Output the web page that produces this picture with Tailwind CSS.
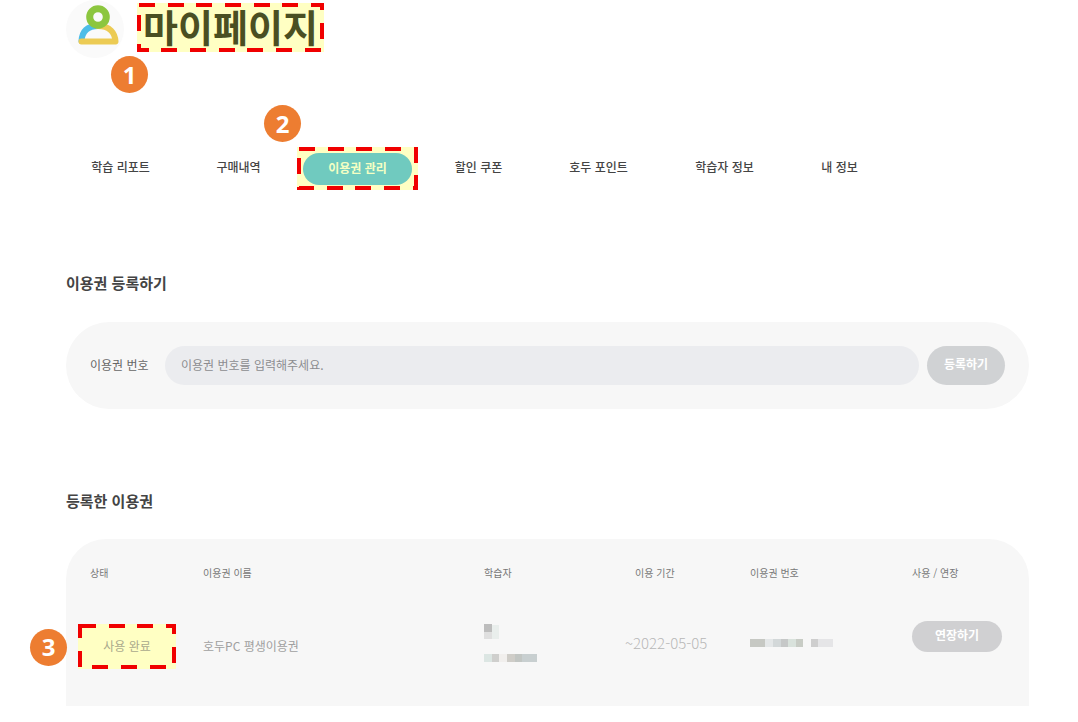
<!DOCTYPE html>
<html lang="ko">
<head>
  <meta charset="UTF-8" />
  <meta name="viewport" content="width=device-width, initial-scale=1.0" />
  <title>마이페이지</title>
  <script src="https://cdn.jsdelivr.net/npm/@tailwindcss/browser@4"></script>
</head>
<body class="bg-white font-['Noto_Sans_CJK_KR',sans-serif] text-[#444]">
  <div class="pl-[66px] pr-[49px] pb-4">
    <!-- Page title -->
    <header class="flex h-[60px] items-start gap-[13px]">
      <div class="flex h-[58px] w-[58px] items-center justify-center rounded-full bg-[#fafafa]">
        <svg class="h-[58px] w-[58px]" viewBox="0 0 58 58" fill="none" stroke-linecap="round" stroke-linejoin="round">
          <path d="M15.5 41C16 33 20 26 32 26" stroke="#4dbde8" stroke-width="6" />
          <path d="M32 26C44 26 49 33 49.5 41.5H15.5" stroke="#eccb54" stroke-width="6" />
          <circle cx="32" cy="17" r="8.3" fill="#fafafa" stroke="#8cc63f" stroke-width="7" />
        </svg>
      </div>
      <div class="relative mt-[3px] flex h-[49px] w-[187px] items-center justify-center bg-[#ffffc3]">
        <h1 class="pb-1 text-[38px] leading-[45px] font-bold text-[#4a4f22]">마이페이지</h1>
        <svg class="absolute inset-0 h-full w-full" aria-hidden="true">
          <rect x="2" y="2" width="183" height="45" fill="none" stroke="#f00000" stroke-width="4" stroke-dasharray="16 13 16 12 16 13" />
        </svg>
        <span class="absolute -left-[26px] top-[53px] flex h-[37px] w-[37px] items-center justify-center rounded-full bg-[#ed7d31] font-['Open_Sans',sans-serif] text-[24px] font-bold text-white">1</span>
      </div>
    </header>

    <!-- Tabs -->
    <nav class="mt-[87px] flex h-[43px] items-center text-[12px] font-medium">
      <a href="#" class="w-[109px] pb-1 text-center">학습 리포트</a>
      <a href="#" class="ml-[19px] w-[89px] pb-1 text-center">구매내역</a>
      <div class="relative ml-[14px] flex h-[43px] w-[121px] items-center justify-center bg-[#ffffc3]">
        <a href="#" class="h-[32px] w-[109px] rounded-full bg-[#70cabf] text-center leading-[30px] font-bold text-[#f4ffc3]">이용권 관리</a>
        <svg class="pointer-events-none absolute inset-0 h-full w-full" aria-hidden="true">
          <rect x="2" y="2" width="117" height="39" fill="none" stroke="#f00000" stroke-width="4" stroke-dasharray="16 13 16 12 16 13" />
        </svg>
        <span class="absolute -left-[33px] -top-[42px] flex h-[37px] w-[37px] items-center justify-center rounded-full bg-[#ed7d31] font-['Open_Sans',sans-serif] text-[24px] font-bold text-white">2</span>
      </div>
      <a href="#" class="ml-[16px] w-[89px] pb-1 text-center">할인 쿠폰</a>
      <a href="#" class="ml-[21px] w-[109px] pb-1 text-center">호두 포인트</a>
      <a href="#" class="ml-[17px] w-[109px] pb-1 text-center">학습자 정보</a>
      <a href="#" class="ml-[26px] w-[69px] pb-1 text-center">내 정보</a>
    </nav>

    <!-- Register a pass -->
    <section class="mt-[81px]">
      <h2 class="text-[15px] leading-[24px] font-bold text-[#444]">이용권 등록하기</h2>
      <form class="mt-[27px] flex h-[87px] items-center rounded-[44px] bg-[#f7f7f7] px-6">
        <label for="passNumber" class="w-[75px] shrink-0 pb-[2px] text-[12px] text-[#666]">이용권 번호</label>
        <input id="passNumber" type="text" placeholder="이용권 번호를 입력해주세요."
          class="h-[39px] min-w-0 flex-1 rounded-full bg-[#ebecef] px-4 pb-[2px] text-[12px] placeholder:text-[#8c8c90] focus:outline-none" />
        <button type="button" class="ml-2 h-[39px] w-[78px] rounded-full bg-[#d0d2d4] pb-1 text-[12px] font-bold text-white">등록하기</button>
      </form>
    </section>

    <!-- Registered passes -->
    <section class="mt-[80px]">
      <h2 class="text-[15px] leading-[24px] font-bold text-[#444]">등록한 이용권</h2>
      <div class="mt-[26px] h-[167px] rounded-t-[40px] bg-[#f7f7f7]">
        <table class="w-full table-fixed text-left">
          <thead>
            <tr class="h-[66px] text-[10px] text-[#777]">
              <th class="w-[137px] pl-6 font-normal">상태</th>
              <th class="w-[281px] font-normal">이용권 이름</th>
              <th class="w-[141px] font-normal">학습자</th>
              <th class="w-[125px] pl-[10px] font-normal">이용 기간</th>
              <th class="w-[162px] font-normal">이용권 번호</th>
              <th class="font-normal">사용 / 연장</th>
            </tr>
          </thead>
          <tbody>
            <tr class="h-[82px] text-[12px] text-[#a0a0a0]">
              <td class="pl-3">
                <div class="relative flex h-[45px] w-[98px] items-center justify-center bg-[#ffffc3]">
                  <span class="text-[#aaa98c]">사용 완료</span>
                  <svg class="absolute inset-0 h-full w-full" aria-hidden="true">
                    <rect x="2" y="2" width="94" height="41" fill="none" stroke="#f00000" stroke-width="4" stroke-dasharray="16 13 16 12 16 13" />
                  </svg>
                  <span class="absolute -left-[48px] top-[5px] flex h-[37px] w-[37px] items-center justify-center rounded-full bg-[#ed7d31] font-['Open_Sans',sans-serif] text-[24px] font-bold text-white">3</span>
                </div>
              </td>
              <td>호두PC 평생이용권</td>
              <td class="pb-1">
                <!-- masked learner name and id -->
                <svg class="h-[40px] w-[54px]" viewBox="0 0 54 40" shape-rendering="crispEdges" aria-hidden="true">
                  <path fill="#bdbdbd" d="M0 0h8v8H0z" />
                  <path fill="#e9eeec" d="M8 1h7v14H8z" />
                  <path fill="#dfdfdf" d="M0 8h8v7H0z" />
                  <path fill="#dce6e3" d="M0 30h8v8H0z" />
                  <path fill="#cfcfcd" d="M8 30h7v8H8z" />
                  <path fill="#f1efed" d="M15 30h8v8h-8z" />
                  <path fill="#cfcdc8" d="M23 30h8v8h-8z" />
                  <path fill="#c2c6c3" d="M31 30h7v8h-7z" />
                  <path fill="#c8cfd0" d="M38 30h15v8H38z" />
                </svg>
              </td>
              <td class="pb-[6px] text-[15px] font-light text-[#b8b8b8]">~2022-05-05</td>
              <td class="pb-[6px]">
                <!-- masked pass number -->
                <svg class="h-[8px] w-[84px]" viewBox="0 0 84 8" shape-rendering="crispEdges" aria-hidden="true">
                  <path fill="#c6c8c3" d="M0 0h15v8H0z" />
                  <path fill="#e4e7e8" d="M15 0h8v8h-8z" />
                  <path fill="#d3d8d9" d="M23 0h8v8h-8z" />
                  <path fill="#c6c8c8" d="M31 0h7v8h-7z" />
                  <path fill="#d9e2dc" d="M38 0h8v8h-8z" />
                  <path fill="#c8ccc5" d="M46 0h7v8h-7z" />
                  <path fill="#cecece" d="M61 0h7v8h-7z" />
                  <path fill="#e5e5e7" d="M68 0h15v8H68z" />
                </svg>
              </td>
              <td class="pb-5"><button type="button" class="h-[31px] w-[90px] rounded-full bg-[#d0d0d2] pb-[2px] text-[12px] font-bold text-white">연장하기</button></td>
            </tr>
          </tbody>
        </table>
      </div>
    </section>
  </div>
</body>
</html>
